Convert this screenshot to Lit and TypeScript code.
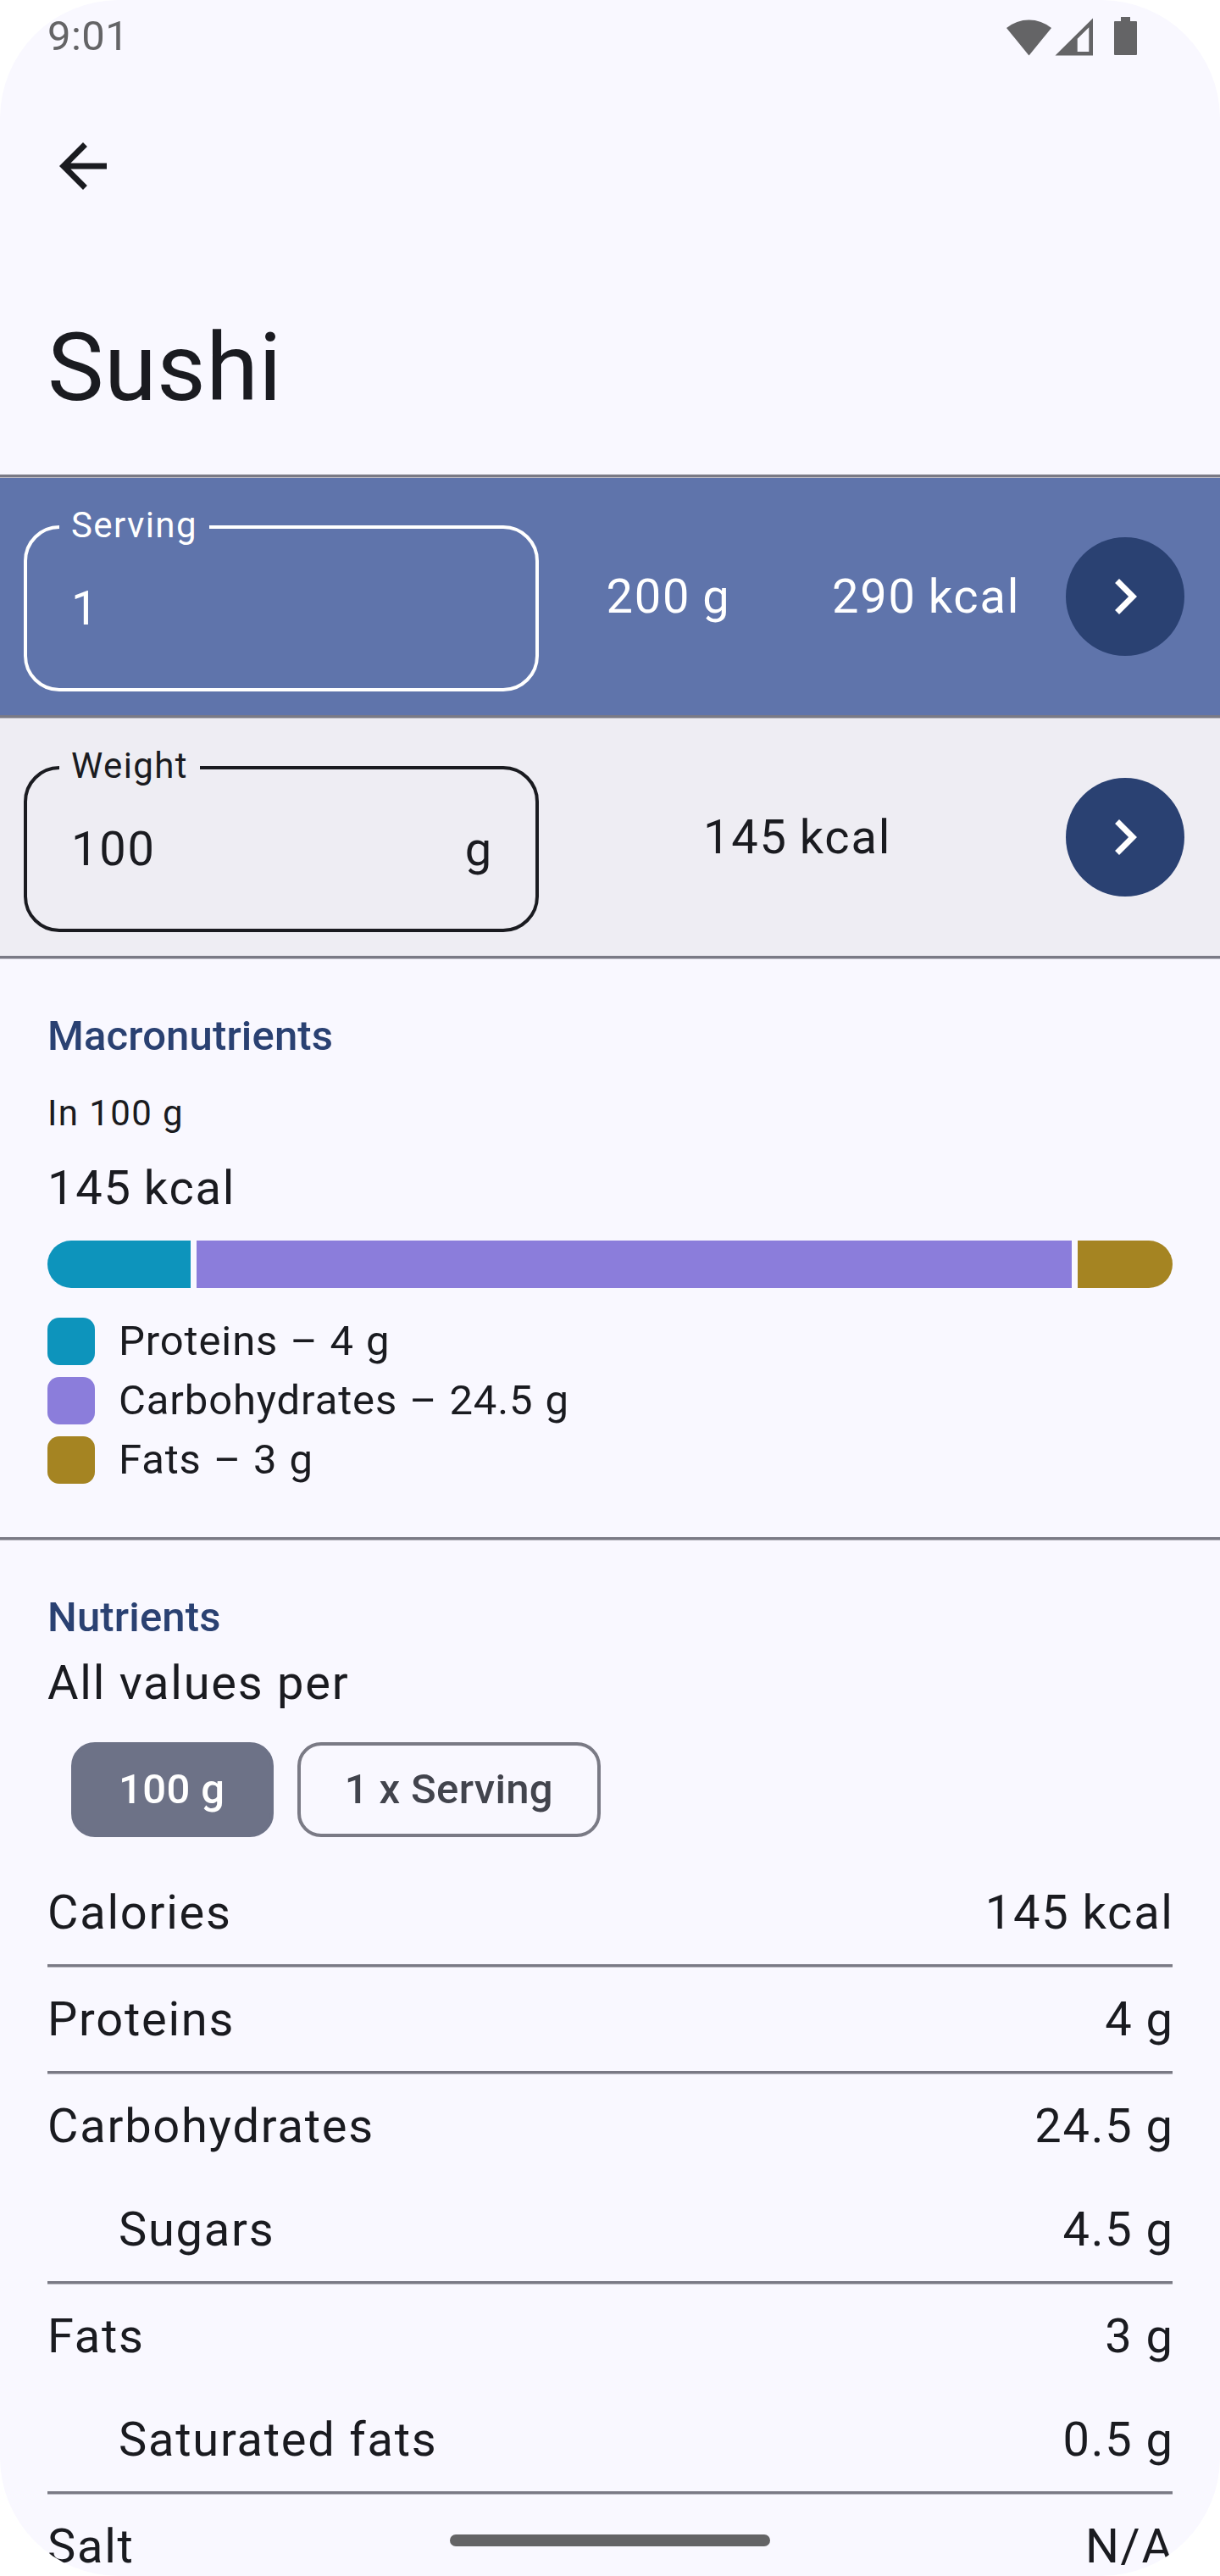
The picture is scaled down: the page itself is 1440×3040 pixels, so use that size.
import { LitElement, html, css, svg } from "lit";
import { customElement, property } from "lit/decorators.js";

interface Macro { name: string; grams: number; tone: string }
interface Nutrient { name: string; value: string; sub?: boolean; last?: boolean }

const MACROS: Macro[] = [
  { name: "Proteins", grams: 4, tone: "teal" },
  { name: "Carbohydrates", grams: 24.5, tone: "violet" },
  { name: "Fats", grams: 3, tone: "gold" },
];

const NUTRIENTS: Nutrient[] = [
  { name: "Calories", value: "145 kcal", last: true },
  { name: "Proteins", value: "4 g", last: true },
  { name: "Carbohydrates", value: "24.5 g" },
  { name: "Sugars", value: "4.5 g", sub: true, last: true },
  { name: "Fats", value: "3 g" },
  { name: "Saturated fats", value: "0.5 g", sub: true, last: true },
  { name: "Salt", value: "N/A" },
];

@customElement("measure-row")
export class MeasureRow extends LitElement {
  @property() label = "";
  @property() value = "";
  @property() suffix = "";
  @property({ type: Array }) results: string[] = [];

  static styles = css`
    :host {
      display: flex;
      align-items: center;
      height: 280px;
      box-sizing: border-box;
      padding: 0 42px 0 28px;
      font-size: 56px;
      line-height: 84px;
      letter-spacing: 1.75px;
    }
    .field {
      flex: none;
      box-sizing: border-box;
      width: 608px;
      height: 224px;
      min-width: 0;
      margin: 0;
      padding: 0 50px 0 52px;
      border: 4px solid currentColor;
      border-radius: 42px;
    }
    .label {
      height: 60px;
      margin-inline-start: -14px;
      padding: 0 14px;
      font-size: 42px;
      line-height: 56px;
      letter-spacing: 1.4px;
    }
    .input {
      display: flex;
      justify-content: space-between;
      padding-top: 24px;
    }
    .results {
      flex: 1;
      display: flex;
      word-spacing: -1.5px;
    }
    .results span {
      flex: 1;
      padding-left: 2px;
      text-align: center;
    }
    .go {
      flex: none;
      width: 140px;
      height: 140px;
      margin-left: 14px;
      padding: 28px;
      box-sizing: border-box;
      border: 0;
      border-radius: 50%;
      background: #2a4172;
      color: #fff;
    }
    .go svg {
      display: block;
      width: 84px;
      height: 84px;
      fill: currentColor;
    }
  `;

  render() {
    return html`
      <fieldset class="field">
        <legend class="label">${this.label}</legend>
        <div class="input"><span>${this.value}</span><span>${this.suffix}</span></div>
      </fieldset>
      <div class="results">${this.results.map((r) => html`<span>${r}</span>`)}</div>
      <button class="go" aria-label="Add">
        <svg viewBox="0 0 24 24"><path d="M10 6 8.59 7.41 13.17 12l-4.58 4.59L10 18l6-6z" /></svg>
      </button>
    `;
  }
}

const statusIcons = svg`
  <path d="M1188 33A42 42 0 0 1 1241 33L1214.5 65.5Z" />
  <path fill-rule="evenodd" d="M1245.5 65.5H1290V21.5ZM1271.7 61V45.7L1285.3 32.3V61Z" />
  <path d="M1323 20h11v5h7a1 1 0 0 1 1 1v38a1 1 0 0 1-1 1h-25a1 1 0 0 1-1-1V26a1 1 0 0 1 1-1h7z" />
`;

@customElement("app-root")
export class AppRoot extends LitElement {
  static styles = css`
    :host {
      display: block;
      background: #fff;
      font-family: Roboto, "Liberation Sans", sans-serif;
      color: #1a1b20;
    }
    .screen {
      position: relative;
      box-sizing: border-box;
      width: 1440px;
      height: 3040px;
      overflow: hidden;
      border-radius: 140px;
      background: #f9f8ff;
      font-size: 56px;
      line-height: 84px;
      letter-spacing: 1.75px;
    }
    .status {
      display: flex;
      justify-content: space-between;
      height: 98px;
      padding-left: 56px;
      color: #646466;
      font-size: 49px;
      line-height: 86px;
      letter-spacing: 0.4px;
    }
    .status svg {
      width: 200px;
      height: 98px;
      margin-right: 60px;
      fill: currentColor;
    }
    .bar {
      height: 224px;
      padding: 56px 56px 0;
      box-sizing: border-box;
    }
    .bar svg {
      display: block;
      width: 84px;
      height: 84px;
      fill: currentColor;
    }
    .title {
      margin: 0;
      height: 238px;
      padding: 42px 56px 0;
      box-sizing: border-box;
      font-size: 112px;
      line-height: 140px;
      font-weight: 400;
      letter-spacing: 0.4px;
    }
    .rule {
      height: 4px;
      background: linear-gradient(#7a7a85 3px, #bab9c2 3px);
    }
    .serving {
      background: #5f74ab;
      color: #fff;
    }
    .weight {
      background: #eeedf3;
    }
    .section {
      padding: 56px 56px 0;
    }
    .macros {
      height: 682px;
      box-sizing: border-box;
    }
    .heading {
      margin: 0;
      font-size: 49px;
      line-height: 70px;
      font-weight: 500;
      letter-spacing: 0.15px;
      color: #2a4172;
    }
    .per {
      margin-top: 28px;
      font-size: 42px;
      line-height: 56px;
      letter-spacing: 1.4px;
    }
    .energy {
      margin-top: 18px;
      word-spacing: -1.5px;
    }
    .split {
      display: flex;
      gap: 7px;
      height: 56px;
      margin: 20px 0 28px;
      border-radius: 28px;
      overflow: hidden;
    }
    .split div {
      flex: none;
    }
    .teal { background: #0d94bc; }
    .violet { background: #8b7ddb; }
    .gold { background: #a58422; }
    .key {
      display: flex;
      align-items: center;
      gap: 28px;
      font-size: 49px;
      line-height: 70px;
      letter-spacing: 0.875px;
      word-spacing: 1.1px;
    }
    .swatch {
      width: 56px;
      height: 56px;
      border-radius: 14px;
    }
    .chips {
      display: flex;
      gap: 28px;
      padding: 28px;
    }
    .chip {
      box-sizing: border-box;
      height: 112px;
      padding: 0 52px;
      border: 4px solid #7a7a85;
      border-radius: 28px;
      font-size: 49px;
      line-height: 104px;
      font-weight: 500;
      letter-spacing: 0.35px;
      color: #42444d;
    }
    .chip.on {
      padding-right: 53.5px;
      border-color: #6d7287;
      background: #6d7287;
      color: #fff;
    }
    .row {
      display: flex;
      justify-content: space-between;
      padding: 19px 0;
    }
    .row.sub {
      padding-left: 84px;
    }
    .amount {
      margin-right: -1.75px;
      word-spacing: -0.5px;
    }
    .pill {
      position: absolute;
      left: 531px;
      top: 2991px;
      width: 378px;
      height: 14px;
      border-radius: 7px;
      background: #646466;
    }
  `;

  render() {
    const total = MACROS.reduce((sum, m) => sum + m.grams, 0);
    return html`
      <div class="screen">
        <div class="status">
          <span>9:01</span>
          <svg viewBox="1180 0 200 98">${statusIcons}</svg>
        </div>
        <div class="bar">
          <svg viewBox="0 0 24 24"><path d="M20 11H7.83l5.59-5.59L12 4l-8 8 8 8 1.41-1.41L7.83 13H20z" /></svg>
        </div>
        <h1 class="title">Sushi</h1>
        <div class="rule"></div>
        <measure-row class="serving" label="Serving" value="1" .results=${["200 g", "290 kcal"]}></measure-row>
        <div class="rule"></div>
        <measure-row class="weight" label="Weight" value="100" suffix="g" .results=${["145 kcal"]}></measure-row>
        <div class="rule"></div>
        <section class="section macros">
          <h2 class="heading">Macronutrients</h2>
          <div class="per">In 100 g</div>
          <div class="energy">145 kcal</div>
          <div class="split">
            ${MACROS.map((m) => html`<div class=${m.tone} style="width:${(m.grams / total) * 100}%"></div>`)}
          </div>
          ${MACROS.map((m) => html`
            <div class="key"><div class="swatch ${m.tone}"></div><span>${m.name} – ${m.grams} g</span></div>
          `)}
        </section>
        <div class="rule"></div>
        <section class="section">
          <h2 class="heading">Nutrients</h2>
          <div class="all">All values per</div>
          <div class="chips">
            <div class="chip on">100 g</div>
            <div class="chip">1 x Serving</div>
          </div>
          ${NUTRIENTS.map((n) => html`
            <div class="row ${n.sub ? "sub" : ""}"><span>${n.name}</span><span class="amount">${n.value}</span></div>
            ${n.last ? html`<div class="rule"></div>` : ""}
          `)}
        </section>
        <div class="pill"></div>
      </div>
    `;
  }
}
